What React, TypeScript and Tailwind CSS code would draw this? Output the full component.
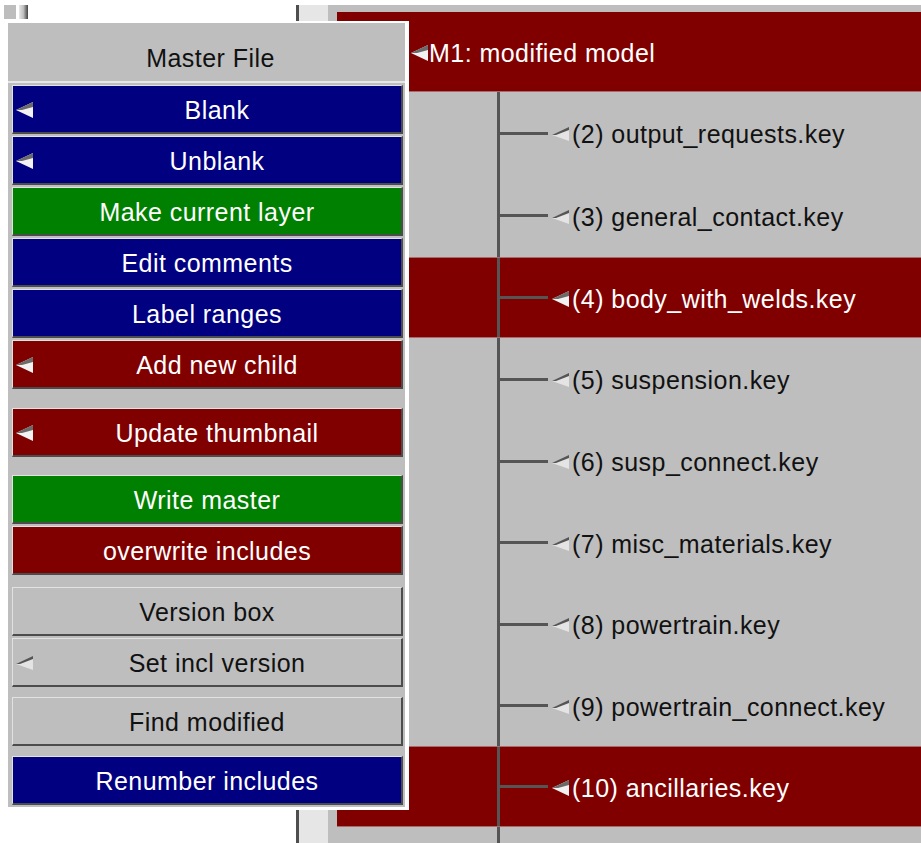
import React from "react";

type Tone = "blue" | "green" | "red" | "gray";

const tones: Record<Tone, string> = {
  blue: "bg-[#000080] text-white",
  green: "bg-[#008000] text-white",
  red: "bg-[#800000] text-white",
  gray: "bg-[#bebebe] text-[#111111]",
};

const buttons: { label: string; tone: Tone; arrow?: boolean; mt: string }[] = [
  { label: "Blank", tone: "blue", arrow: true, mt: "mt-[2px]" },
  { label: "Unblank", tone: "blue", arrow: true, mt: "mt-[2px]" },
  { label: "Make current layer", tone: "green", mt: "mt-[2px]" },
  { label: "Edit comments", tone: "blue", mt: "mt-[2px]" },
  { label: "Label ranges", tone: "blue", mt: "mt-[2px]" },
  { label: "Add new child", tone: "red", arrow: true, mt: "mt-[2px]" },
  { label: "Update thumbnail", tone: "red", arrow: true, mt: "mt-[19px]" },
  { label: "Write master", tone: "green", mt: "mt-[18px]" },
  { label: "overwrite includes", tone: "red", mt: "mt-[2px]" },
  { label: "Version box", tone: "gray", mt: "mt-[12px]" },
  { label: "Set incl version", tone: "gray", arrow: true, mt: "mt-[2px]" },
  { label: "Find modified", tone: "gray", mt: "mt-[10px]" },
  { label: "Renumber includes", tone: "blue", mt: "mt-[10px]" },
];

const rows: { label: string; h: string; hot?: boolean }[] = [
  { label: "(2) output_requests.key", h: "h-[82px]" },
  { label: "(3) general_contact.key", h: "h-[83px]" },
  { label: "(4) body_with_welds.key", h: "h-[81px]", hot: true },
  { label: "(5) suspension.key", h: "h-[82px]" },
  { label: "(6) susp_connect.key", h: "h-[82px]" },
  { label: "(7) misc_materials.key", h: "h-[81px]" },
  { label: "(8) powertrain.key", h: "h-[82px]" },
  { label: "(9) powertrain_connect.key", h: "h-[81px]" },
  { label: "(10) ancillaries.key", h: "h-[81px]", hot: true },
];

// left-pointing popup arrow, solid on coloured fills, flat on grey
function Arrow({ flat = false }: { flat?: boolean }) {
  if (flat) {
    return (
      <svg width="19" height="18" viewBox="0 0 19 18" className="shrink-0">
        <polygon points="1,10 18,4 18,16" fill="#e4e4e4" />
        <polygon points="1,10 18,2 18,5 5,10" fill="#555555" />
      </svg>
    );
  }
  return (
    <svg width="19" height="18" viewBox="0 0 19 18" className="shrink-0">
      <polygon points="1,9 18,1 18,17" fill="#f2f2f2" />
      <polygon points="1,9 18,1 18,6 7,9" fill="#6a6a6a" />
    </svg>
  );
}

function MenuButton({ label, tone, arrow, mt }: { label: string; tone: Tone; arrow?: boolean; mt: string }) {
  return (
    <div
      className={`${mt} ${tones[tone]} h-[49px] flex items-center border-t border-l border-b-2 border-r-2 border-t-[#e2e2e2] border-l-[#e2e2e2] border-b-[#4c4c4c] border-r-[#4c4c4c]`}
    >
      {arrow ? (
        <div className="w-[20px] pl-[2px] pt-[2px] flex items-center">
          <Arrow flat={tone === "gray"} />
        </div>
      ) : null}
      <span className="flex-1 text-center pt-[4px]">{label}</span>
    </div>
  );
}

function TreeRow({ label, h, hot }: { label: string; h: string; hot?: boolean }) {
  return (
    <div
      className={`${h} flex ${hot ? "bg-[#800000] text-white border-y border-[#a86a6a]" : "text-[#111111]"}`}
    >
      <div className="w-[160px]" />
      <div className="w-[3px] bg-[#555555]" />
      <div className="flex items-center">
        <div className="w-[48px] h-[3px] bg-[#555555]" />
        <div className="ml-[3px] pt-[2px]">
          <Arrow flat={!hot} />
        </div>
        <span className="ml-[2px] pt-[4px]">{label}</span>
      </div>
    </div>
  );
}

export default function App() {
  return (
    <div className="relative w-[921px] h-[843px] bg-white overflow-hidden flex font-['Liberation_Sans',Arial,sans-serif] text-[25px] tracking-[0.45px]">
      <div className="w-[296px] pt-[5px] pl-[4px] flex items-start gap-[3px]">
        <div className="w-[12px] h-[14px] bg-[#bdbdbd]" />
        <div className="w-[9px] h-[14px] bg-gradient-to-r from-[#e8e8e8] via-[#bdbdbd] to-[#444444]" />
      </div>
      <div className="mt-[5px] w-[3px] bg-[#4e4e4e]" />
      <div className="mt-[5px] w-[29px] bg-[#e6e6e6]" />
      <div className="mt-[5px] flex-1 bg-[#bebebe] pl-[9px] pt-[7px] flex flex-col">
        <div className="h-[80px] bg-[#800000] text-white flex items-center pl-[73px] border-b border-[#a86a6a]">
          <div className="pt-[2px]">
            <Arrow />
          </div>
          <span className="pt-[4px]">M1: modified model</span>
        </div>
        {rows.map((r) => (
          <TreeRow key={r.label} {...r} />
        ))}
        <div className="flex-1 flex">
          <div className="w-[160px]" />
          <div className="w-[3px] bg-[#555555]" />
        </div>
      </div>

      <div className="absolute left-[7px] top-[21px] bg-white pt-[2px] pl-[1px] pr-[4px] pb-[3px]">
        <div className="w-[397px] bg-[#bebebe] pb-[2px] flex flex-col">
          <div className="h-[60px] pt-[14px] pl-[8px] flex items-center justify-center border-b-2 border-[#e6e6e6] text-[#111111]">
            Master File
          </div>
          <div className="ml-[4px] mr-[2px] flex flex-col">
            {buttons.map((b) => (
              <MenuButton key={b.label} {...b} />
            ))}
          </div>
        </div>
      </div>
    </div>
  );
}
